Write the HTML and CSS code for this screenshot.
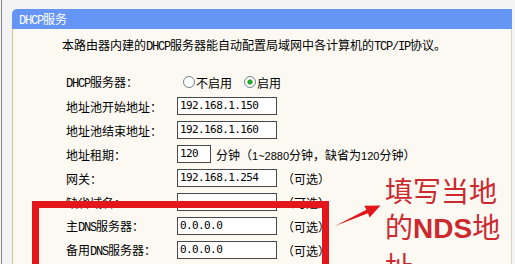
FILE: index.html
```html
<!DOCTYPE html>
<html lang="zh-CN">
<head>
<meta charset="utf-8">
<title>DHCP服务</title>
<link rel="stylesheet" href="styles.css">
</head>
<body>
<div class="screen">
  <section class="panel">
    <div class="panel-head"><span class="en">DHCP</span>服务</div>
    <div class="panel-body">
      <p class="desc">本路由器内建的<span class="en">DHCP</span>服务器能自动配置局域网中各计算机的<span class="en">TCP/IP</span>协议。</p>
      <div class="form">
        <div class="lbl"><span class="en">DHCP</span>服务器：</div>
        <div class="field">
          <span class="radio"></span><span class="opt">不启用</span>
          <span class="radio on"></span><span class="opt">启用</span>
        </div>

        <div class="lbl">地址池开始地址：</div>
        <div class="field"><span class="box">192.168.1.150</span></div>

        <div class="lbl">地址池结束地址：</div>
        <div class="field"><span class="box">192.168.1.160</span></div>

        <div class="lbl">地址租期：</div>
        <div class="field"><span class="box short">120</span><span class="hint">分钟（<span class="num">1~2880</span>分钟，缺省为<span class="num">120</span>分钟）</span></div>

        <div class="lbl">网关：</div>
        <div class="field"><span class="box">192.168.1.254</span><span class="hint">（可选）</span></div>

        <div class="lbl">缺省域名：</div>
        <div class="field"><span class="box"></span><span class="hint">（可选）</span></div>

        <div class="lbl">主<span class="en">DNS</span>服务器：</div>
        <div class="field"><span class="box">0.0.0.0</span><span class="hint">（可选）</span></div>

        <div class="lbl">备用<span class="en">DNS</span>服务器：</div>
        <div class="field"><span class="box">0.0.0.0</span><span class="hint">（可选）</span></div>
      </div>
    </div>
  </section>
</div>

<div class="highlight"></div>
<svg class="arrow" width="515" height="264" viewBox="0 0 515 264">
  <polygon points="335,226 368,213.3 369.6,217.5 380.5,205.5 364.3,205.8 366.4,209.7" fill="#e3161c"/>
</svg>
<div class="note">填写当地<br>的<b>NDS</b>地<br>址</div>
</body>
</html>
```
FILE: styles.css
```css
html, body {
  margin: 0;
  height: 264px;
  overflow: hidden;
}
body {
  position: relative;
  background: #f4f4f4;
  font-family: "Noto Sans CJK SC", "DejaVu Sans", sans-serif;
  font-size: 12px;
  color: #000;
}
.screen {
  height: 264px;
  margin-left: 1px;
  border-left: 1px solid #8a8a8a;
  padding: 9px 0 0 10px;
  box-sizing: border-box;
  overflow: hidden;
}
.panel {
  width: 500px;
}
.en {
  font-family: "Liberation Mono", monospace;
  font-size: 12px;
  letter-spacing: -1.2px;
}
.num {
  font-family: "Liberation Sans", sans-serif;
  font-size: 11px;
}
.panel-head {
  height: 20px;
  line-height: 20px;
  background: #6595f5;
  border-radius: 5px 0 0 0;
  color: #fff;
  padding-left: 7px;
}
.panel-body {
  height: 235px;
  box-sizing: border-box;
  overflow: hidden;
  background: #fbf9f2;
  border-left: 1px solid #d4c39b;
  border-right: 1px solid #d9d2c0;
  padding: 8px 0 0 49px;
}
.desc {
  margin: 0;
  line-height: 16px;
}
.form {
  display: grid;
  grid-template-columns: 111px auto;
  grid-auto-rows: 24px;
  align-items: center;
  margin-top: 15px;
  padding-left: 4px;
}
.field {
  display: flex;
  align-items: center;
}
.radio {
  width: 12px;
  height: 12px;
  box-sizing: border-box;
  border: 1px solid #75838f;
  border-radius: 50%;
  background: #fff;
  margin: 0 1px 0 12px;
}
.radio:first-child {
  margin-left: 6px;
}
.radio.on {
  background: radial-gradient(circle, #27a827 0, #27a827 2.2px, #fff 3px);
}
.box {
  display: inline-block;
  box-sizing: border-box;
  width: 100px;
  height: 18px;
  border: 1px solid #4a4a4a;
  background: #fff;
  padding-left: 2px;
  font-family: "DejaVu Sans Mono", monospace;
  font-size: 11px;
  letter-spacing: -0.6px;
  line-height: 16px;
}
.box.short {
  width: 34px;
}
.hint {
  margin-left: 5px;
}
.highlight {
  position: absolute;
  left: 32px;
  top: 201px;
  width: 297px;
  height: 63px;
  box-sizing: border-box;
  border: 7px solid #e3161c;
  border-bottom-width: 0;
}
.arrow {
  position: absolute;
  left: 0;
  top: 0;
}
.note {
  position: absolute;
  left: 385px;
  top: 172px;
  height: 92px;
  overflow: hidden;
  font-size: 28px;
  line-height: 36px;
  color: #cc2a2e;
  white-space: nowrap;
}
.note b {
  font-family: "Liberation Sans", sans-serif;
  font-weight: bold;
}
```
